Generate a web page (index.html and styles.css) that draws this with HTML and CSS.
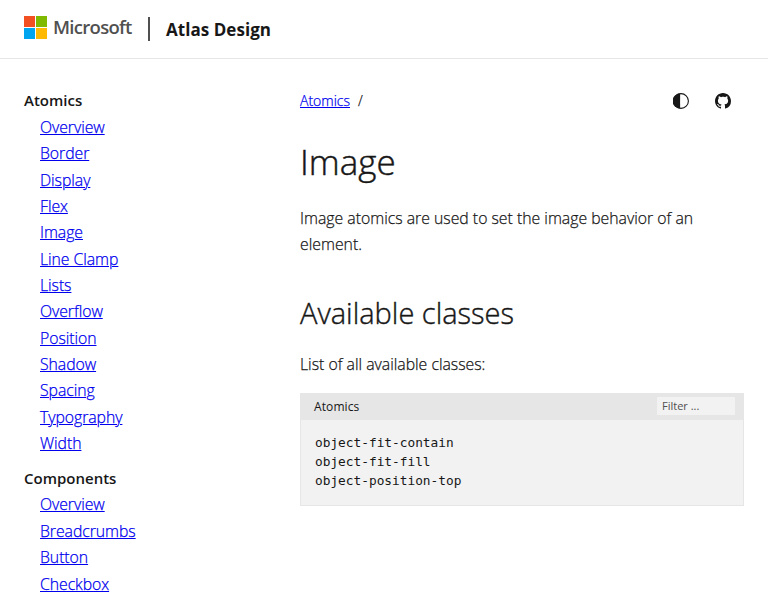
FILE: index.html
```
<!DOCTYPE html>
<html lang="en">
<head>
<meta charset="utf-8">
<title>Image - Atlas Design</title>
<link rel="stylesheet" href="styles.css">
</head>
<body>
<header class="header">
  <svg class="mark" width="23" height="23" viewBox="0 0 23 23" aria-hidden="true">
    <path fill="#f25022" d="M0 0h11v11H0z"/><path fill="#7fba00" d="M12 0h11v11H12z"/>
    <path fill="#00a4ef" d="M0 12h11v11H0z"/><path fill="#ffb900" d="M12 12h11v11H12z"/>
  </svg>
  <span class="brand">Microsoft</span>
  <span class="divider"></span>
  <a class="site">Atlas Design</a>
</header>
<div class="layout">
  <nav class="sidebar">
    <h2 class="group">Atomics</h2>
    <ul class="links">
      <li><a href="#">Overview</a></li>
      <li><a href="#">Border</a></li>
      <li><a href="#">Display</a></li>
      <li><a href="#">Flex</a></li>
      <li><a href="#">Image</a></li>
      <li><a href="#">Line Clamp</a></li>
      <li><a href="#">Lists</a></li>
      <li><a href="#">Overflow</a></li>
      <li><a href="#">Position</a></li>
      <li><a href="#">Shadow</a></li>
      <li><a href="#">Spacing</a></li>
      <li><a href="#">Typography</a></li>
      <li><a href="#">Width</a></li>
    </ul>
    <h2 class="group">Components</h2>
    <ul class="links">
      <li><a href="#">Overview</a></li>
      <li><a href="#">Breadcrumbs</a></li>
      <li><a href="#">Button</a></li>
      <li><a href="#">Checkbox</a></li>
    </ul>
  </nav>
  <main class="content">
    <div class="topbar">
      <div class="crumbs"><a href="#">Atomics</a><span class="slash">/</span></div>
      <div class="actions">
        <svg width="16" height="16" viewBox="0 0 16 16" aria-hidden="true"><circle cx="8" cy="8" r="7.4" fill="none" stroke="#171717" stroke-width="1.1"/><path fill="#171717" d="M7.1 0.4a7.6 7.6 0 0 0 0 15.2z"/></svg>
        <svg width="16" height="16" viewBox="0 0 16 16" aria-hidden="true"><path fill="#171717" d="M8 0C3.58 0 0 3.58 0 8c0 3.54 2.29 6.53 5.47 7.59.4.07.55-.17.55-.38 0-.19-.01-.82-.01-1.49-2.01.37-2.53-.49-2.69-.94-.09-.23-.48-.94-.82-1.13-.28-.15-.68-.52-.01-.53.63-.01 1.08.58 1.23.82.72 1.21 1.87.87 2.33.66.07-.52.28-.87.51-1.07-1.78-.2-3.64-.89-3.64-3.95 0-.87.31-1.59.82-2.15-.08-.2-.36-1.02.08-2.12 0 0 .67-.21 2.2.82.64-.18 1.32-.27 2-.27s1.36.09 2 .27c1.53-1.04 2.2-.82 2.2-.82.44 1.1.16 1.92.08 2.12.51.56.82 1.27.82 2.15 0 3.07-1.87 3.75-3.65 3.95.29.25.54.73.54 1.48 0 1.07-.01 1.93-.01 2.2 0 .21.15.46.55.38A8.01 8.01 0 0 0 16 8c0-4.42-3.58-8-8-8z"/></svg>
      </div>
    </div>
    <h1 class="title">Image</h1>
    <p class="intro">Image atomics are used to set the image behavior of an element.</p>
    <h2 class="subtitle">Available classes</h2>
    <p class="lead">List of all available classes:</p>
    <section class="panel">
      <div class="panel-head"><span class="panel-name">Atomics</span><input class="filter" type="text" placeholder="Filter ..."></div>
      <pre class="classes">object-fit-contain
object-fit-fill
object-position-top</pre>
    </section>
  </main>
</div>
</body>
</html>
```
FILE: styles.css
```
* { box-sizing: border-box; margin: 0; padding: 0; }
html { overflow: hidden; }
body { height: 600px; overflow: hidden; background: #fff; color: #171717; font: 300 15.8px/26px "Open Sans", "Noto Sans", sans-serif; }
a[href] { color: #0000ee; text-decoration: underline; text-decoration-thickness: 1px; text-underline-offset: 1px; }
.links, .crumbs, .intro, .lead { -webkit-text-stroke: 0.25px; }
.header { height: 59px; border-bottom: 1px solid #e6e6e6; padding: 0 24px; display: flex; align-items: flex-start; }
.mark { margin-top: 16px; }
.brand { width: 79px; margin: 14px 0 0 6px; color: #505050; font-size: 18.5px; font-weight: 600; letter-spacing: -0.7px; white-space: nowrap; }
.divider { width: 2px; height: 24px; margin: 17px 0 0 16px; background: #505050; }
.site { margin: 17px 0 0 16px; font-size: 17px; font-weight: 700; letter-spacing: 0.05px; }
.layout { display: grid; grid-template-columns: 276px 444px; padding: 0 24px; }
.sidebar { padding-top: 28px; }
.group { font-size: 15px; line-height: 26px; font-weight: 600; }
.links { list-style: none; padding: 1px 0 0 16px; margin-bottom: 9px; letter-spacing: -0.05px; }
.group + .links ~ .links { padding-top: 0; }
.links li { height: 26.35px; line-height: 26.35px; }
.topbar { height: 32px; margin-top: 26px; display: flex; justify-content: space-between; align-items: center; }
.crumbs { font-size: 14px; line-height: 20px; }
.slash { margin-left: 8px; }
.actions { display: flex; gap: 26px; padding-right: 13px; }
.title { margin-top: 20px; font-size: 35px; line-height: 50px; font-weight: 300; -webkit-text-stroke: 0.45px; }
.intro { margin-top: 18px; }
.subtitle { margin-top: 36px; font-size: 29px; line-height: 40px; font-weight: 300; -webkit-text-stroke: 0.4px; }
.lead { margin-top: 18px; }
.panel { height: 113px; margin-top: 16px; border: 1px solid #e6e6e6; background: #f2f2f2; }
.panel-head { height: 26px; padding: 0 8px 0 13px; background: #e6e6e6; display: flex; justify-content: space-between; align-items: center; }
.panel-name { font-size: 12px; font-weight: 400; letter-spacing: 0.1px; }
.filter { width: 78px; height: 18px; margin-top: -2px; padding: 0 5px; border: 0; background: #f2f2f2; font: 400 11px/18px "Open Sans", sans-serif; }
.filter::placeholder { color: #505050; }
.classes { padding: 13px 14px; font: 12.8px/19px "DejaVu Sans Mono", monospace; }
```
